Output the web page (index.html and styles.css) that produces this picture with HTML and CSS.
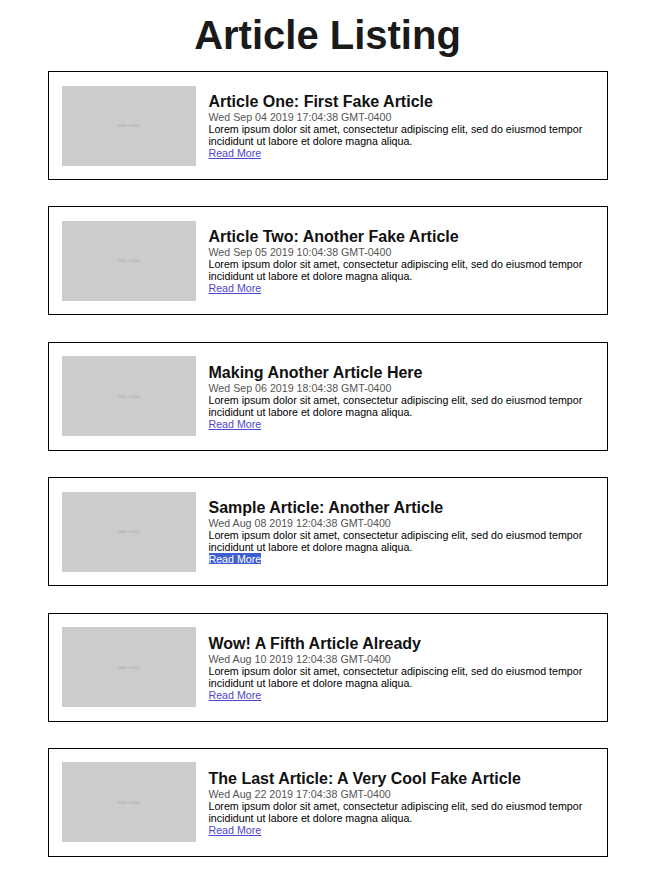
FILE: index.html
```html
<!DOCTYPE html>
<html>
<head>
<meta charset="utf-8">
<link rel="stylesheet" href="styles.css">
</head>
<body>
<h1 class="page-title">Article Listing</h1>
<div class="list">
  <div class="card">
    <div class="thumb"><span>2000 x 1200</span></div>
    <div class="info">
      <h2 class="title">Article One: First Fake Article</h2>
      <div class="date">Wed Sep 04 2019 17:04:38 GMT-0400</div>
      <p class="body">Lorem ipsum dolor sit amet, consectetur adipiscing elit, sed do eiusmod tempor incididunt ut labore et dolore magna aliqua.</p>
      <a class="more" href="#">Read More</a>
    </div>
  </div>
  <div class="card">
    <div class="thumb"><span>2000 x 1200</span></div>
    <div class="info">
      <h2 class="title">Article Two: Another Fake Article</h2>
      <div class="date">Wed Sep 05 2019 10:04:38 GMT-0400</div>
      <p class="body">Lorem ipsum dolor sit amet, consectetur adipiscing elit, sed do eiusmod tempor incididunt ut labore et dolore magna aliqua.</p>
      <a class="more" href="#">Read More</a>
    </div>
  </div>
  <div class="card">
    <div class="thumb"><span>2000 x 1200</span></div>
    <div class="info">
      <h2 class="title">Making Another Article Here</h2>
      <div class="date">Wed Sep 06 2019 18:04:38 GMT-0400</div>
      <p class="body">Lorem ipsum dolor sit amet, consectetur adipiscing elit, sed do eiusmod tempor incididunt ut labore et dolore magna aliqua.</p>
      <a class="more" href="#">Read More</a>
    </div>
  </div>
  <div class="card">
    <div class="thumb"><span>2000 x 1200</span></div>
    <div class="info">
      <h2 class="title">Sample Article: Another Article</h2>
      <div class="date">Wed Aug 08 2019 12:04:38 GMT-0400</div>
      <p class="body">Lorem ipsum dolor sit amet, consectetur adipiscing elit, sed do eiusmod tempor incididunt ut labore et dolore magna aliqua.</p>
      <a class="more selected" href="#">Read More</a>
    </div>
  </div>
  <div class="card">
    <div class="thumb"><span>2000 x 1200</span></div>
    <div class="info">
      <h2 class="title">Wow! A Fifth Article Already</h2>
      <div class="date">Wed Aug 10 2019 12:04:38 GMT-0400</div>
      <p class="body">Lorem ipsum dolor sit amet, consectetur adipiscing elit, sed do eiusmod tempor incididunt ut labore et dolore magna aliqua.</p>
      <a class="more" href="#">Read More</a>
    </div>
  </div>
  <div class="card">
    <div class="thumb"><span>2000 x 1200</span></div>
    <div class="info">
      <h2 class="title">The Last Article: A Very Cool Fake Article</h2>
      <div class="date">Wed Aug 22 2019 17:04:38 GMT-0400</div>
      <p class="body">Lorem ipsum dolor sit amet, consectetur adipiscing elit, sed do eiusmod tempor incididunt ut labore et dolore magna aliqua.</p>
      <a class="more" href="#">Read More</a>
    </div>
  </div>
</div>
</body>
</html>
```
FILE: styles.css
```css
body {
  margin: 0 10px 0 0;
  font-family: "Liberation Sans", Arial, sans-serif;
  color: #111;
  background: #fff;
}
.page-title {
  margin: 12px 0 13px;
  font-size: 40px;
  line-height: 46px;
  text-align: center;
  font-weight: bold;
  color: #1a1a1a;
}
.list {
  width: 560px;
  margin: 0 auto;
  display: flex;
  flex-direction: column;
  gap: 26.4px;
}
.card {
  border: 1px solid #000;
  padding: 13.5px 13px;
  display: flex;
  align-items: center;
  gap: 13px;
  height: 80px;
}
.thumb {
  flex: 0 0 134px;
  height: 80px;
  background: #cccccc;
  display: flex;
  align-items: center;
  justify-content: center;
}
.thumb span {
  font-size: 4px;
  color: #a5a5a5;
}
.info {
  flex: 1;
  font-size: 10.67px;
  line-height: 12px;
}
.title {
  margin: 1px 0 0;
  font-size: 16px;
  line-height: 18px;
  font-weight: bold;
  color: #111;
}
.date {
  color: #555;
}
.body {
  margin: 0;
  color: #000;
}
.more {
  color: #4d47c9;
}
.more.selected {
  background: #3d5fd3;
  color: #fff;
}
```
